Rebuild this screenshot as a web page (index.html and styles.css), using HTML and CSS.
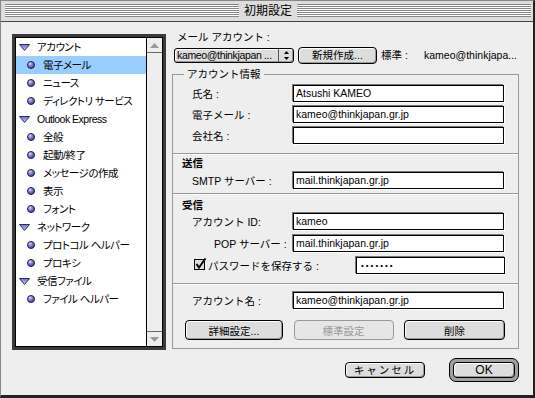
FILE: index.html
```html
<!DOCTYPE html>
<html>
<head>
  <meta charset="utf-8">
  <meta name="viewport" content="width=device-width, initial-scale=1">
  <title>初期設定</title>
  <link rel="stylesheet" href="styles.css">
</head>
<body>
  <svg class="defs" width="0" height="0">
    <defs>
      <radialGradient id="ball" cx="0.35" cy="0.3" r="0.75">
        <stop offset="0" stop-color="#e0e0ff"/>
        <stop offset="0.45" stop-color="#8080d8"/>
        <stop offset="1" stop-color="#3a3a8a"/>
      </radialGradient>
      <linearGradient id="tri" x1="0" y1="0" x2="0" y2="1">
        <stop offset="0" stop-color="#7070d0"/>
        <stop offset="1" stop-color="#c8c8ff"/>
      </linearGradient>
    </defs>
  </svg>

  <div class="window">
    <div class="titlebar">
      <span class="stripes"></span>
      <span class="title">初期設定</span>
      <span class="stripes"></span>
    </div>

    <div class="content">
      <div class="main">
        <!-- category list -->
        <div class="list">
          <div class="list-inner">
            <ul class="tree">
              <li class="group"><svg class="tri" width="11" height="7"><polygon points="0.5,0.5 10.5,0.5 5.5,6.5" fill="url(#tri)" stroke="#2a2a60"/></svg>アカウント</li>
              <li class="item selected"><svg class="ball" width="8" height="8"><circle cx="4" cy="4" r="3.5" fill="url(#ball)" stroke="#222244"/></svg>電子メール</li>
              <li class="item"><svg class="ball" width="8" height="8"><circle cx="4" cy="4" r="3.5" fill="url(#ball)" stroke="#222244"/></svg>ニュース</li>
              <li class="item"><svg class="ball" width="8" height="8"><circle cx="4" cy="4" r="3.5" fill="url(#ball)" stroke="#222244"/></svg>ディレクトリ サービス</li>
              <li class="group"><svg class="tri" width="11" height="7"><polygon points="0.5,0.5 10.5,0.5 5.5,6.5" fill="url(#tri)" stroke="#2a2a60"/></svg>Outlook Express</li>
              <li class="item"><svg class="ball" width="8" height="8"><circle cx="4" cy="4" r="3.5" fill="url(#ball)" stroke="#222244"/></svg>全般</li>
              <li class="item"><svg class="ball" width="8" height="8"><circle cx="4" cy="4" r="3.5" fill="url(#ball)" stroke="#222244"/></svg>起動/終了</li>
              <li class="item"><svg class="ball" width="8" height="8"><circle cx="4" cy="4" r="3.5" fill="url(#ball)" stroke="#222244"/></svg>メッセージの作成</li>
              <li class="item"><svg class="ball" width="8" height="8"><circle cx="4" cy="4" r="3.5" fill="url(#ball)" stroke="#222244"/></svg>表示</li>
              <li class="item"><svg class="ball" width="8" height="8"><circle cx="4" cy="4" r="3.5" fill="url(#ball)" stroke="#222244"/></svg>フォント</li>
              <li class="group"><svg class="tri" width="11" height="7"><polygon points="0.5,0.5 10.5,0.5 5.5,6.5" fill="url(#tri)" stroke="#2a2a60"/></svg>ネットワーク</li>
              <li class="item"><svg class="ball" width="8" height="8"><circle cx="4" cy="4" r="3.5" fill="url(#ball)" stroke="#222244"/></svg>プロトコル ヘルパー</li>
              <li class="item"><svg class="ball" width="8" height="8"><circle cx="4" cy="4" r="3.5" fill="url(#ball)" stroke="#222244"/></svg>プロキシ</li>
              <li class="group"><svg class="tri" width="11" height="7"><polygon points="0.5,0.5 10.5,0.5 5.5,6.5" fill="url(#tri)" stroke="#2a2a60"/></svg>受信ファイル</li>
              <li class="item"><svg class="ball" width="8" height="8"><circle cx="4" cy="4" r="3.5" fill="url(#ball)" stroke="#222244"/></svg>ファイル ヘルパー</li>
            </ul>
            <div class="scrollbar">
              <div class="arrow up"><svg width="9" height="5"><polygon points="4.5,0 9,5 0,5" fill="#999"/></svg></div>
              <div class="track"></div>
              <div class="arrow down"><svg width="9" height="5"><polygon points="0,0 9,0 4.5,5" fill="#999"/></svg></div>
            </div>
          </div>
        </div>

        <!-- settings panel -->
        <div class="panel">
          <div class="account-label">メール アカウント :</div>
          <div class="account-row">
            <div class="popup">
              <span class="popup-text">kameo@thinkjapan ...</span>
              <span class="popup-arrows"><svg width="5" height="9"><polygon points="2.5,0 5,3 0,3" fill="#000"/><polygon points="0,6 5,6 2.5,9" fill="#000"/></svg></span>
            </div>
            <button class="btn new-btn">新規作成...</button>
            <span class="default-label">標準 :</span>
            <span class="default-value">kameo@thinkjapa...</span>
          </div>

          <fieldset class="box">
            <legend>アカウント情報</legend>
            <div class="rows first">
              <div class="row"><span class="label">氏名 :</span><div class="field">Atsushi KAMEO</div></div>
              <div class="row"><span class="label">電子メール :</span><div class="field">kameo@thinkjapan.gr.jp</div></div>
              <div class="row"><span class="label">会社名 :</span><div class="field"></div></div>
            </div>

            <div class="sep"></div>
            <div class="heading">送信</div>
            <div class="row"><span class="label">SMTP サーバー :</span><div class="field">mail.thinkjapan.gr.jp</div></div>

            <div class="sep short"></div>
            <div class="heading tall">受信</div>
            <div class="rows">
              <div class="row"><span class="label">アカウント ID:</span><div class="field">kameo</div></div>
              <div class="row"><span class="label indent">POP サーバー :</span><div class="field">mail.thinkjapan.gr.jp</div></div>
              <div class="row check-row">
                <svg class="check" width="13" height="13"><rect x="0.5" y="1.5" width="10" height="10" fill="#ddd" stroke="#000"/><path d="M2.5 6 L5 9.5 L11.5 0.5" fill="none" stroke="#000" stroke-width="2"/></svg>
                <span class="check-label">パスワードを保存する :</span>
                <div class="field password">•••••••</div>
              </div>
            </div>

            <div class="sep"></div>
            <div class="row name-row"><span class="label">アカウント名 :</span><div class="field">kameo@thinkjapan.gr.jp</div></div>

            <div class="actions">
              <button class="btn act">詳細設定...</button>
              <button class="btn act wide" disabled>標準設定</button>
              <button class="btn act wider">削除</button>
            </div>
          </fieldset>
        </div>
      </div>

      <div class="footer">
        <button class="btn cancel">キャンセル</button>
        <div class="default-ring"><button class="btn ok">OK</button></div>
      </div>
    </div>
  </div>
</body>
</html>
```

FILE: styles.css
```css
/* Mac OS 9 style preferences dialog */
body {
  margin: 0;
  padding: 0;
  font-family: "Liberation Sans", "Noto Sans CJK JP", sans-serif;
  font-size: 10.5px;
  color: #000;
  background: #fff;
}
.defs {
  display: block;
  width: 0;
  height: 0;
}
.window {
  width: 535px;
  height: 398px;
  box-sizing: border-box;
  background: #eee;
  border-top: 1px solid #888;
  border-left: 1px solid #888;
  border-right: 2px solid #222;
  border-bottom: 3px solid #222;
  display: flex;
  flex-direction: column;
}

/* title bar */
.titlebar {
  height: 20px;
  flex: none;
  background: #ddd;
  border-bottom: 1px solid #444;
  display: flex;
  align-items: flex-start;
  padding: 0 2px 0 4px;
}
.stripes {
  flex: 1;
  height: 13px;
  margin-top: 3px;
  background: repeating-linear-gradient(#888 0 1px, #fff 1px 2px);
}
.title {
  padding: 0 5px;
  font-size: 12px;
  line-height: 20px;
}

.content {
  flex: 1;
  display: flex;
  flex-direction: column;
  padding-left: 11px;
}
.main {
  display: flex;
  align-items: flex-start;
}

/* list */
.list {
  width: 154px;
  height: 316px;
  margin-top: 12px;
  box-sizing: border-box;
  border: 3px solid #3a3a3a;
  display: flex;
}
.list-inner {
  flex: 1;
  display: flex;
  border: 1px solid #000;
  background: #fff;
}
.tree {
  flex: 1;
  list-style: none;
  margin: 0;
  padding: 0;
}
.tree li {
  height: 18px;
  display: flex;
  align-items: center;
  white-space: nowrap;
  font-feature-settings: "palt";
  letter-spacing: -0.5px;
  line-height: 18px;
}
.tree .group {
  padding-left: 3px;
}
.tree .tri {
  margin-right: 7px;
}
.tree .item {
  padding-left: 11px;
}
.tree .ball {
  margin-right: 8px;
}
.tree .selected {
  background: #9cf;
}
.scrollbar {
  width: 15px;
  border-left: 1px solid #000;
  background: #eee;
  display: flex;
  flex-direction: column;
}
.arrow {
  height: 14px;
  display: flex;
  align-items: center;
  justify-content: center;
}
.arrow.up {
  border-bottom: 1px solid #666;
}
.arrow.down {
  border-top: 1px solid #666;
}
.track {
  flex: 1;
}

/* panel */
.panel {
  width: 347px;
  margin-left: 6px;
}
.account-label {
  margin-top: 8px;
  padding-left: 5px;
  line-height: 14px;
}
.account-row {
  display: flex;
  align-items: flex-start;
  height: 17px;
  margin-top: 3px;
}
.popup {
  width: 120px;
  height: 15px;
  box-sizing: border-box;
  margin: 1px 0 0 2px;
  border: 1px solid #000;
  border-radius: 3px;
  background: #ddd;
  box-shadow: inset 1px 1px 0 #fff, inset -1px -1px 0 #999;
  display: flex;
}
.popup-text {
  flex: 1;
  padding-left: 2px;
  line-height: 13px;
  letter-spacing: -0.35px;
  white-space: nowrap;
  overflow: hidden;
}
.popup-arrows {
  width: 14px;
  border-left: 1px solid #555;
  display: flex;
  align-items: center;
  justify-content: center;
}
.btn {
  font: inherit;
  color: #000;
  padding: 0;
  border: 1px solid #000;
  border-radius: 4px;
  background: #ddd;
  box-shadow: inset 1px 1px 0 #fff, inset -1px -1px 0 #999;
}
.btn:disabled {
  color: #999;
  border-color: #999;
  background: #e6e6e6;
  box-shadow: none;
}
.new-btn {
  width: 79px;
  height: 17px;
  margin-left: 4px;
  line-height: 15px;
}
.default-label {
  margin-left: 4px;
  line-height: 17px;
}
.default-value {
  margin-left: auto;
  padding-right: 2px;
  line-height: 17px;
}

/* account info group */
.box {
  margin: 3px 0 0;
  padding: 0 0 8px;
  border: 1px solid #999;
  min-width: 0;
}
.box legend {
  margin-left: 11px;
  padding: 0 3px;
  line-height: 14px;
}
.rows.first {
  padding-top: 4px;
}
.row {
  display: flex;
  align-items: center;
  height: 17px;
  padding-left: 19px;
}
.rows .row + .row {
  margin-top: 4px;
}
.rows:not(.first) .row + .row {
  margin-top: 5px;
}
.label {
  width: 101px;
  white-space: nowrap;
}
.label.indent {
  padding-left: 22px;
  box-sizing: border-box;
}
.field {
  width: 211px;
  height: 17px;
  box-sizing: border-box;
  border: 1px solid #000;
  box-shadow: -1px -1px 0 #777, 1px 1px 0 #fff;
  background: #fff;
  padding-left: 2px;
  line-height: 15px;
  white-space: nowrap;
}
.sep {
  margin-top: 9px;
  border-top: 1px solid #999;
  border-bottom: 1px solid #fff;
}
.sep.short {
  margin-top: 4px;
}
.heading {
  height: 17px;
  line-height: 17px;
  padding-left: 9px;
  font-weight: bold;
}
.heading.tall {
  height: 18px;
  line-height: 20px;
}
.check-row {
  padding-left: 21px;
}
.check {
  margin-top: -2px;
}
.check-label {
  width: 148px;
  margin-left: 1px;
  white-space: nowrap;
}
.field.password {
  width: 149px;
  padding-left: 4px;
  font-size: 8px;
  letter-spacing: 2px;
}
.name-row {
  margin-top: 7px;
}
.actions {
  display: flex;
  justify-content: space-between;
  margin-top: 11px;
  padding: 0 13px 0 12px;
}
.act {
  width: 98px;
  height: 20px;
}
.act.wide {
  width: 100px;
}
.act.wider {
  width: 101px;
}

/* bottom buttons */
.footer {
  display: flex;
  justify-content: flex-end;
  align-items: center;
  gap: 24px;
  margin-top: 8px;
  padding-right: 14px;
}
.cancel {
  width: 80px;
  height: 16px;
  line-height: 14px;
  letter-spacing: 2px;
}
.default-ring {
  width: 70px;
  height: 24px;
  box-sizing: border-box;
  border: 1px solid #000;
  border-radius: 7px;
  background: #a0a0a0;
  padding: 3px;
  display: flex;
}
.ok {
  flex: 1;
  font-size: 12px;
  line-height: 14px;
}
```
